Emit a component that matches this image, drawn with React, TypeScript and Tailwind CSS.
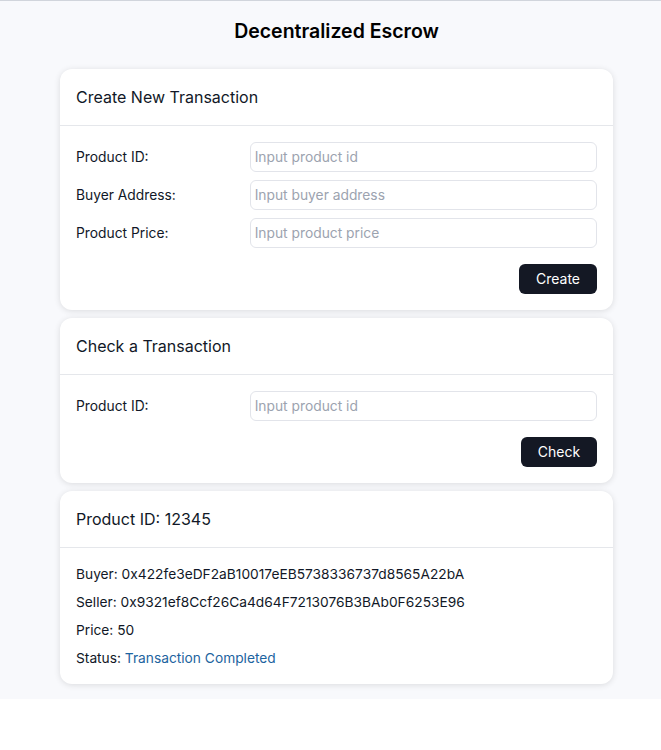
import React from 'react';

const Card = ({
  title,
  bodyClass = 'pb-4',
  children,
}: {
  title: string;
  bodyClass?: string;
  children: React.ReactNode;
}) => (
  <div className="bg-white rounded-xl shadow-[0_1px_6px_rgba(0,0,0,0.12)]">
    <div className="h-[57px] px-4 flex items-center border-b border-gray-200">
      <h2 className="text-base text-[#111827]">{title}</h2>
    </div>
    <div className={`px-4 pt-4 ${bodyClass}`}>{children}</div>
  </div>
);

const Field = ({ label, placeholder }: { label: string; placeholder: string }) => (
  <div className="grid grid-cols-3 items-center">
    <label className="text-[13.8px] text-[#111827] pt-[1px]">{label}</label>
    <input
      className="col-span-2 h-[30px] px-1 rounded-md border border-[#e2e4ea] text-[13.8px] placeholder:text-[#9ca3af] outline-none"
      placeholder={placeholder}
    />
  </div>
);

const App = () => {
  return (
    <div className="font-['Inter',sans-serif]">
      <div className="bg-[#f8f9fc] border-t border-gray-300 pt-[16px] pb-[15px]">
        <div className="w-[553px] ml-[60px] flex flex-col gap-2">
          <h1 className="text-[19.5px] font-semibold text-black text-center h-[28px] leading-[28px] mb-[16px]">
            Decentralized Escrow
          </h1>

          {/* Create */}
          <Card title="Create New Transaction">
            <div className="flex flex-col gap-2">
              <Field label="Product ID:" placeholder="Input product id" />
              <Field label="Buyer Address:" placeholder="Input buyer address" />
              <Field label="Product Price:" placeholder="Input product price" />
            </div>
            <div className="flex justify-end mt-4">
              <button className="h-[30px] w-[78px] rounded-md bg-[#141824] text-white text-sm">Create</button>
            </div>
          </Card>

          {/* Check */}
          <Card title="Check a Transaction">
            <Field label="Product ID:" placeholder="Input product id" />
            <div className="flex justify-end mt-4">
              <button className="h-[30px] w-[76px] rounded-md bg-[#141824] text-white text-sm">Check</button>
            </div>
          </Card>

          {/* Result */}
          <Card title="Product ID: 12345" bodyClass="pb-[12px]">
            <div className="flex flex-col text-[13.75px] text-[#111827] -mt-[4px]">
              <p className="h-[28px] flex items-center">Buyer: 0x422fe3eDF2aB10017eEB5738336737d8565A22bA</p>
              <p className="h-[28px] flex items-center">Seller: 0x9321ef8Ccf26Ca4d64F7213076B3BAb0F6253E96</p>
              <p className="h-[28px] flex items-center">Price: 50</p>
              <p className="h-[28px] flex items-center">
                Status:&nbsp;<span className="text-[#1d64a0]">Transaction Completed</span>
              </p>
            </div>
          </Card>
        </div>
      </div>
    </div>
  );
};

export default App;
